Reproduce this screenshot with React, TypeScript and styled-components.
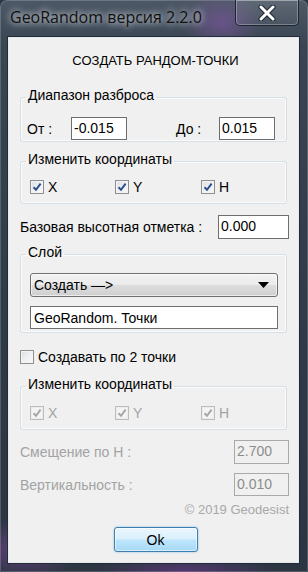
import styled, { createGlobalStyle } from 'styled-components';

const GlobalStyle = createGlobalStyle`
  html, body {
    margin: 0;
    padding: 0;
    background: #2e3845;
  }
`;

const Window = styled.div`
  width: 308px;
  height: 572px;
  box-sizing: border-box;
  display: flex;
  flex-direction: column;
  padding: 0 9px 9px 8px;
  border-radius: 7px 7px 0 0;
  background:
    radial-gradient(ellipse 60px 30px at 8% 96%, rgba(140, 70, 170, 0.55), transparent),
    radial-gradient(ellipse 90px 20px at 60% 100%, rgba(120, 60, 160, 0.5), transparent),
    radial-gradient(ellipse 40px 30px at 72% 4%, rgba(150, 90, 190, 0.45), transparent),
    linear-gradient(180deg, #4d5866 0%, #3a4553 8%, #2f3a48 60%, #2c3542 100%);
  box-shadow: inset 0 0 0 1px rgba(255, 255, 255, 0.18);
  font-family: 'Liberation Sans', Arial, sans-serif;
`;

const TitleBar = styled.div`
  height: 37px;
  flex-shrink: 0;
  display: flex;
  align-items: flex-start;
  justify-content: space-between;
`;

const Title = styled.span`
  margin: 8px 0 0 2px;
  font-family: 'Open Sans', 'Noto Sans', sans-serif;
  font-size: 16px;
  line-height: 19px;
  color: #111;
  text-shadow: 0 0 6px rgba(230, 236, 242, 0.9), 0 0 10px rgba(230, 236, 242, 0.7);
`;

const CloseButton = styled.div`
  width: 64px;
  height: 26px;
  box-sizing: border-box;
  display: flex;
  align-items: center;
  justify-content: center;
  border: 1px solid #1c2530;
  border-top: none;
  border-radius: 0 0 5px 5px;
  background: linear-gradient(180deg, rgba(255, 255, 255, 0.1), rgba(255, 255, 255, 0.04));
  box-shadow: inset 0 0 0 1px rgba(255, 255, 255, 0.28);
`;

const Client = styled.div`
  flex: 1;
  display: flex;
  flex-direction: column;
  padding: 0 9px 0 11px;
  background: #f0f0f0;
  border: 1px solid #e4e9ee;
  box-shadow: 0 0 0 1px #222b36;
  color: #000;
  font-size: 14px;
`;

const Heading = styled.div`
  margin-top: 15px;
  text-align: center;
  font-size: 13px;
  line-height: 16px;
  padding-left: 2px;
`;

const Group = styled.fieldset<{ $mt: number; $pb: number }>`
  margin: ${(p) => p.$mt}px 2px 0 0;
  padding: 0 8px ${(p) => p.$pb}px 9px;
  border: 1px solid #d5dfe5;
  border-radius: 3px;
  box-shadow: inset 0 0 0 1px rgba(255, 255, 255, 0.7);
  min-width: 0;
`;

const Legend = styled.legend`
  margin-left: -4px;
  padding: 0 2px 4px;
  font-size: 14px;
  line-height: 16px;
  color: #000;
`;

const RangeRow = styled.div`
  margin: 10px 3px 0 -3px;
  display: grid;
  grid-template-columns: 44px 56px 1fr 43px 56px;
  align-items: center;
`;

const Text = styled.span<{ $dim?: boolean }>`
  font-size: 14px;
  line-height: 16px;
  color: ${(p) => (p.$dim ? '#a3a3a3' : '#000')};
  white-space: nowrap;
`;

const Field = styled.div<{ $w: number; $h?: number; $dim?: boolean }>`
  width: ${(p) => p.$w}px;
  height: ${(p) => p.$h ?? 23}px;
  box-sizing: border-box;
  padding: 2px 0 0 2px;
  border: 1px solid ${(p) => (p.$dim ? '#a9a9a9' : '#6e6e6e')};
  background: ${(p) => (p.$dim ? '#f0f0f0' : '#fff')};
  color: ${(p) => (p.$dim ? '#8c8c8c' : '#000')};
  font-size: 14px;
  line-height: 16px;
`;

const CheckRow = styled.div<{ $mt: number }>`
  margin-top: ${(p) => p.$mt}px;
  display: grid;
  grid-template-columns: 85px 86px auto;
  align-items: center;
`;

const CheckItem = styled.label`
  display: flex;
  align-items: center;
  gap: 4px;
`;

const Box = styled.span<{ $dim?: boolean }>`
  width: 14px;
  height: 14px;
  box-sizing: border-box;
  display: flex;
  align-items: center;
  justify-content: center;
  border: 1px solid ${(p) => (p.$dim ? '#bcbcbc' : '#8e8f8f')};
  background: ${(p) =>
    p.$dim
      ? '#f4f4f4'
      : 'linear-gradient(135deg, #d9dde3 0%, #eef0f3 50%, #f7f8f9 100%)'};
  box-shadow: inset 0 0 0 1px ${(p) => (p.$dim ? '#ececec' : '#f4f4f4')};
`;

const InlineRow = styled.div<{ $mt: number }>`
  margin-top: ${(p) => p.$mt}px;
  display: flex;
  align-items: center;
  justify-content: space-between;
`;

const Select = styled.div`
  margin-top: 9px;
  height: 24px;
  box-sizing: border-box;
  display: flex;
  align-items: center;
  justify-content: space-between;
  padding: 0 8px 0 3px;
  border: 1px solid #707070;
  border-radius: 3px;
  background: linear-gradient(180deg, #f3f3f3 0%, #ebebeb 48%, #dddddd 52%, #cfcfcf 100%);
  box-shadow: inset 0 0 0 1px rgba(255, 255, 255, 0.6);
  font-size: 14px;
`;

const LayerName = styled(Field)`
  margin-top: 9px;
  padding: 3px 0 0 3px;
`;

const SingleCheck = styled(CheckItem)`
  margin-top: 16px;
  height: 16px;
`;

const Copyright = styled.div`
  margin-top: 6px;
  text-align: right;
  font-size: 13px;
  line-height: 16px;
  color: #a8a8a8;
`;

const OkButton = styled.div`
  margin: 9px auto 0;
  width: 84px;
  height: 25px;
  box-sizing: border-box;
  display: flex;
  align-items: center;
  justify-content: center;
  border: 1px solid #3c7fb1;
  border-radius: 3px;
  background: linear-gradient(180deg, #eaf6fd 0%, #d9f0fc 48%, #bee6fd 52%, #a7d9f5 100%);
  box-shadow: inset 0 0 0 1px rgba(255, 255, 255, 0.55), 0 0 2px rgba(60, 150, 220, 0.6);
  font-size: 14px;
  position: relative;
  left: 1px;
`;

const Check = ({ dim }: { dim?: boolean }) => (
  <svg width="10" height="10" viewBox="0 0 10 10">
    <path
      d="M1.5 5.2 L4 7.8 L8.6 1.6"
      fill="none"
      stroke={dim ? '#a6a6a6' : '#2d4f8a'}
      strokeWidth="2"
    />
  </svg>
);

const CheckBox = ({ label, checked = true, dim }: { label: string; checked?: boolean; dim?: boolean }) => (
  <CheckItem>
    <Box $dim={dim}>{checked && <Check dim={dim} />}</Box>
    <Text $dim={dim}>{label}</Text>
  </CheckItem>
);

export default function App() {
  return (
    <>
      <GlobalStyle />
      <Window>
        <TitleBar>
          <Title>GeoRandom версия 2.2.0</Title>
          <CloseButton>
            <svg width="22" height="16" viewBox="0 0 22 16">
              <path d="M5 2 L17 14 M17 2 L5 14" stroke="#1d2631" strokeWidth="5" strokeLinecap="round" />
              <path d="M5 2 L17 14 M17 2 L5 14" stroke="#fff" strokeWidth="3" strokeLinecap="round" />
            </svg>
          </CloseButton>
        </TitleBar>
        <Client>
          <Heading>СОЗДАТЬ РАНДОМ-ТОЧКИ</Heading>

          <Group $mt={18} $pb={1}>
            <Legend>Диапазон разброса</Legend>
            <RangeRow>
              <Text>От :</Text>
              <Field $w={56}>-0.015</Field>
              <span />
              <Text>До :</Text>
              <Field $w={56}>0.015</Field>
            </RangeRow>
          </Group>

          <Group $mt={9} $pb={8}>
            <Legend>Изменить координаты</Legend>
            <CheckRow $mt={8}>
              <CheckBox label="X" />
              <CheckBox label="Y" />
              <CheckBox label="H" />
            </CheckRow>
          </Group>

          <InlineRow $mt={11}>
            <Text>Базовая высотная отметка :</Text>
            <Field $w={71} $h={24}>0.000</Field>
          </InlineRow>

          <Group $mt={5} $pb={3}>
            <Legend>Слой</Legend>
            <Select>
              <span>Создать —&gt;</span>
              <svg width="11" height="6" viewBox="0 0 11 6">
                <path d="M0 0 H11 L5.5 6 Z" fill="#000" />
              </svg>
            </Select>
            <LayerName $w={248}>GeoRandom. Точки</LayerName>
          </Group>

          <SingleCheck>
            <Box />
            <Text>Создавать по 2 точки</Text>
          </SingleCheck>

          <Group $mt={11} $pb={8}>
            <Legend>Изменить координаты</Legend>
            <CheckRow $mt={9}>
              <CheckBox label="X" dim />
              <CheckBox label="Y" dim />
              <CheckBox label="H" dim />
            </CheckRow>
          </Group>

          <InlineRow $mt={10}>
            <Text $dim>Смещение по Н :</Text>
            <Field $w={55} $h={24} $dim>2.700</Field>
          </InlineRow>

          <InlineRow $mt={9}>
            <Text $dim>Вертикальность :</Text>
            <Field $w={55} $dim>0.010</Field>
          </InlineRow>

          <Copyright>© 2019 Geodesist</Copyright>

          <OkButton>Ok</OkButton>
        </Client>
      </Window>
    </>
  );
}
